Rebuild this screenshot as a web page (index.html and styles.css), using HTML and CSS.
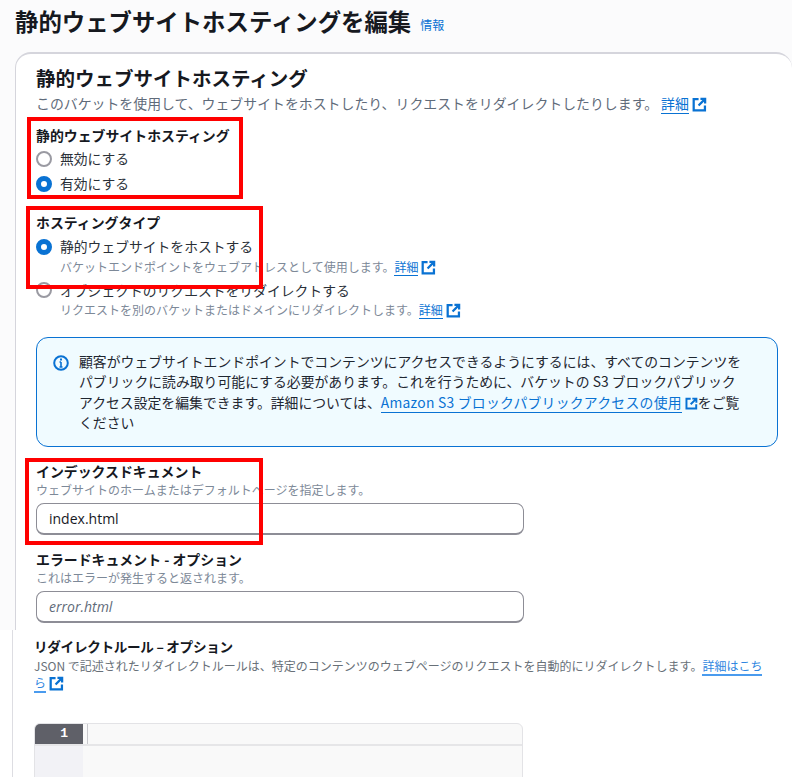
FILE: index.html
```html
<!DOCTYPE html>
<html lang="ja">
<head>
    <meta charset="UTF-8">
    <title>静的ウェブサイトホスティングを編集</title>
    <link rel="stylesheet" href="styles.css">
</head>
<body>
    <svg class="defs" width="0" height="0">
        <symbol id="ext" viewBox="0 0 16 16">
            <path d="M7 2.2H1.8v12h12V9" fill="none" stroke="currentColor" stroke-width="2.4"/>
            <path d="M9 2h5v5M14 2L7 9" fill="none" stroke="currentColor" stroke-width="2.4"/>
        </symbol>
    </svg>
    <div class="page">
        <div class="upper">
            <div class="page-title">
                <h1>静的ウェブサイトホスティングを編集</h1>
                <a class="info" href="#">情報</a>
            </div>
            <div class="card">
                <h2>静的ウェブサイトホスティング</h2>
                <p class="lead">このバケットを使用して、ウェブサイトをホストしたり、リクエストをリダイレクトしたりします。<a class="link link-lead" href="#">詳細</a><svg class="ext"><use href="#ext"/></svg></p>

                <div class="field field-hosting">
                    <div class="label label-hosting">静的ウェブサイトホスティング</div>
                    <div class="radio"><span class="dot"></span>無効にする</div>
                    <div class="radio"><span class="dot on"></span>有効にする</div>
                </div>

                <div class="field field-type">
                    <div class="label label-type">ホスティングタイプ</div>
                    <div class="radio"><span class="dot on"></span>静的ウェブサイトをホストする</div>
                    <div class="hint hint-radio">バケットエンドポイントをウェブアドレスとして使用します。<a class="link" href="#">詳細</a><svg class="ext"><use href="#ext"/></svg></div>
                    <div class="radio radio-second"><span class="dot"></span>オブジェクトのリクエストをリダイレクトする</div>
                    <div class="hint hint-radio">リクエストを別のバケットまたはドメインにリダイレクトします。<a class="link" href="#">詳細</a><svg class="ext"><use href="#ext"/></svg></div>
                </div>

                <div class="alert">
                    <svg class="alert-icon" viewBox="0 0 16 16">
                        <circle cx="8" cy="8" r="6.8" fill="none" stroke="#0972d3" stroke-width="2"/>
                        <path d="M8 7v5M6.5 12h3M6.5 7H8" fill="none" stroke="#0972d3" stroke-width="1.6"/>
                        <path d="M8 3.6v1.8" stroke="#0972d3" stroke-width="2"/>
                    </svg>
                    <p>顧客がウェブサイトエンドポイントでコンテンツにアクセスできるようにするには、すべてのコンテンツをパブリックに読み取り可能にする必要があります。これを行うために、バケットの S3 ブロックパブリックアクセス設定を編集できます。詳細については、<a class="link" href="#">Amazon S3 ブロックパブリックアクセスの使用</a><svg class="ext ext-small"><use href="#ext"/></svg>をご覧ください</p>
                </div>

                <div class="field field-index">
                    <div class="label">インデックスドキュメント</div>
                    <div class="hint">ウェブサイトのホームまたはデフォルトページを指定します。</div>
                    <div class="input">index.html</div>
                </div>

                <div class="field field-error">
                    <div class="label">エラードキュメント - オプション</div>
                    <div class="hint">これはエラーが発生すると返されます。</div>
                    <div class="input placeholder">error.html</div>
                </div>
            </div>
        </div>

        <div class="lower">
            <div class="label label-narrow">リダイレクトルール – オプション</div>
            <p class="hint hint-lower">JSON で記述されたリダイレクトルールは、特定のコンテンツのウェブページのリクエストを自動的にリダイレクトします。<a class="link link-light" href="#">詳細はこちら</a><svg class="ext"><use href="#ext"/></svg></p>
            <div class="editor">
                <div class="editor-row">
                    <div class="line-no">1</div>
                    <div class="line-bar"></div>
                </div>
                <div class="editor-body">
                    <div class="gutter"></div>
                </div>
            </div>
        </div>

        <!-- annotations -->
        <div class="mark mark-1"></div>
        <div class="mark mark-2"></div>
        <div class="mark mark-3"></div>
    </div>
</body>
</html>
```

FILE: styles.css
```css
html, body {
    margin: 0;
    padding: 0;
    background-color: #ffffff;
}

.defs {
    position: absolute;
}

.page {
    position: relative;
    width: 803px;
    height: 777px;
    overflow: hidden;
    font-family: "Noto Sans CJK JP", "Open Sans", sans-serif;
    color: #16191f;
}

.upper {
    height: 630px;
    width: 792px;
    overflow: hidden;
    box-sizing: border-box;
    padding-left: 15px;
    background-color: #fbfbfc;
}

.page-title {
    display: flex;
    align-items: flex-end;
    gap: 9px;
    height: 52px;
    box-sizing: border-box;
    padding-bottom: 15px;
}

h1 {
    margin: 0;
    font-size: 23.4px;
    line-height: 32px;
    font-weight: 700;
}

.info {
    font-size: 12px;
    line-height: 18px;
    color: #0972d3;
    text-decoration: none;
    margin-bottom: 3px;
}

.card {
    width: 777px;
    height: 640px;
    box-sizing: border-box;
    padding: 10px 0 0 20px;
    background-color: #ffffff;
    border: 1px solid #d5d5dc;
    border-width: 2px 0 0 1px;
    border-radius: 16px 16px 0 0;
}

h2 {
    margin: 0;
    font-size: 19.5px;
    line-height: 28px;
    font-weight: 700;
}

.lead {
    margin: 1px 0 0;
    font-size: 13.9px;
    line-height: 20px;
    color: #5f6b7a;
}

.link-lead {
    margin-left: 3px;
}

.label {
    font-size: 13.9px;
    line-height: 20px;
    font-weight: 700;
}

.label-hosting {
    margin-bottom: 1px;
}

.label-type {
    margin-bottom: 2px;
}

.radio {
    display: flex;
    align-items: center;
    gap: 8px;
    font-size: 13.8px;
    line-height: 25px;
    color: #2a3038;
}

.dot {
    width: 12px;
    height: 12px;
    flex: none;
    border: 2px solid #9a9aa2;
    border-radius: 50%;
    background-color: #ffffff;
}

.dot.on {
    width: 6px;
    height: 6px;
    border: 5px solid #0972d3;
}

.hint {
    font-size: 12px;
    line-height: 17px;
    color: #7d8998;
}

.hint-radio {
    margin-left: 24px;
    margin-top: -1.5px;
}

.radio-second {
    margin-top: 3px;
}

.link {
    color: #0972d3;
    text-decoration: none;
    border-bottom: 1px solid #0972d3;
}

.ext {
    width: 15px;
    height: 15px;
    margin-left: 3px;
    vertical-align: -3px;
    color: #0972d3;
}

.ext-small {
    width: 13px;
    height: 13px;
    margin: 0 0 0 3px;
    vertical-align: -2px;
}

.field-hosting {
    margin-top: 12px;
}

.field-type {
    margin-top: 16px;
}

.alert {
    display: flex;
    gap: 10px;
    width: 742px;
    height: 110px;
    box-sizing: border-box;
    margin-top: 19px;
    padding: 13px 30px 0 16px;
    background-color: #f0fbff;
    border: 1px solid #0972d3;
    border-radius: 12px;
}

.alert-icon {
    width: 16px;
    height: 16px;
    flex: none;
    margin-top: 4px;
}

.alert p {
    margin: 0;
    font-size: 13.85px;
    line-height: 20.4px;
    color: #1e2630;
}

.alert .link {
    letter-spacing: 0.25px;
}

.field-index {
    margin-top: 14px;
}

.field-error {
    margin-top: 14px;
}

.input {
    width: 488px;
    height: 32px;
    box-sizing: border-box;
    margin-top: 5px;
    padding-left: 12px;
    font-family: "Open Sans", sans-serif;
    font-size: 14px;
    line-height: 29px;
    color: #16191f;
    background-color: #ffffff;
    border: 1px solid #8d8d96;
    border-bottom-width: 2px;
    border-radius: 8px;
}

.input.placeholder {
    font-style: italic;
    color: #5f6b7a;
}

.lower {
    height: 147px;
    width: 782px;
    box-sizing: border-box;
    margin-left: 12px;
    padding: 6px 0 0 21px;
    background-color: #ffffff;
    border-left: 1px solid #dddde2;
}

.label-narrow {
    font-size: 13.6px;
    letter-spacing: -0.3px;
}

.hint-lower {
    margin: 1px 0 0;
    width: 730px;
    color: #687078;
}

.link-light {
    color: #2f86e0;
    border-bottom: 2px solid #4a9bee;
}

.editor {
    width: 487px;
    height: 60px;
    margin-top: 31.5px;
    overflow: hidden;
    background-color: #f9f9f9;
    border: 1px solid #e3e3e6;
    border-radius: 6px 6px 0 0;
}

.editor-row {
    display: flex;
    height: 20px;
    border-bottom: 2px solid #e6e6e8;
}

.line-no {
    width: 48px;
    font-family: "Liberation Mono", monospace;
    font-size: 13px;
    font-weight: 700;
    line-height: 20px;
    text-align: right;
    padding-right: 15px;
    box-sizing: border-box;
    color: #ffffff;
    background-color: #5f6068;
}

.line-bar {
    width: 4px;
    border-right: 1px solid #c8c8cc;
}

.editor-body {
    height: 40px;
}

.gutter {
    width: 48px;
    height: 100%;
    background-color: #f2f2f6;
}

/* red annotation frames */
.mark {
    position: absolute;
    box-sizing: border-box;
    border: 4px solid #ff0000;
}

.mark-1 {
    left: 27px;
    top: 117px;
    width: 216px;
    height: 82px;
}

.mark-2 {
    left: 26px;
    top: 206px;
    width: 237px;
    height: 83px;
}

.mark-3 {
    left: 25px;
    top: 458px;
    width: 238px;
    height: 87px;
}
```
